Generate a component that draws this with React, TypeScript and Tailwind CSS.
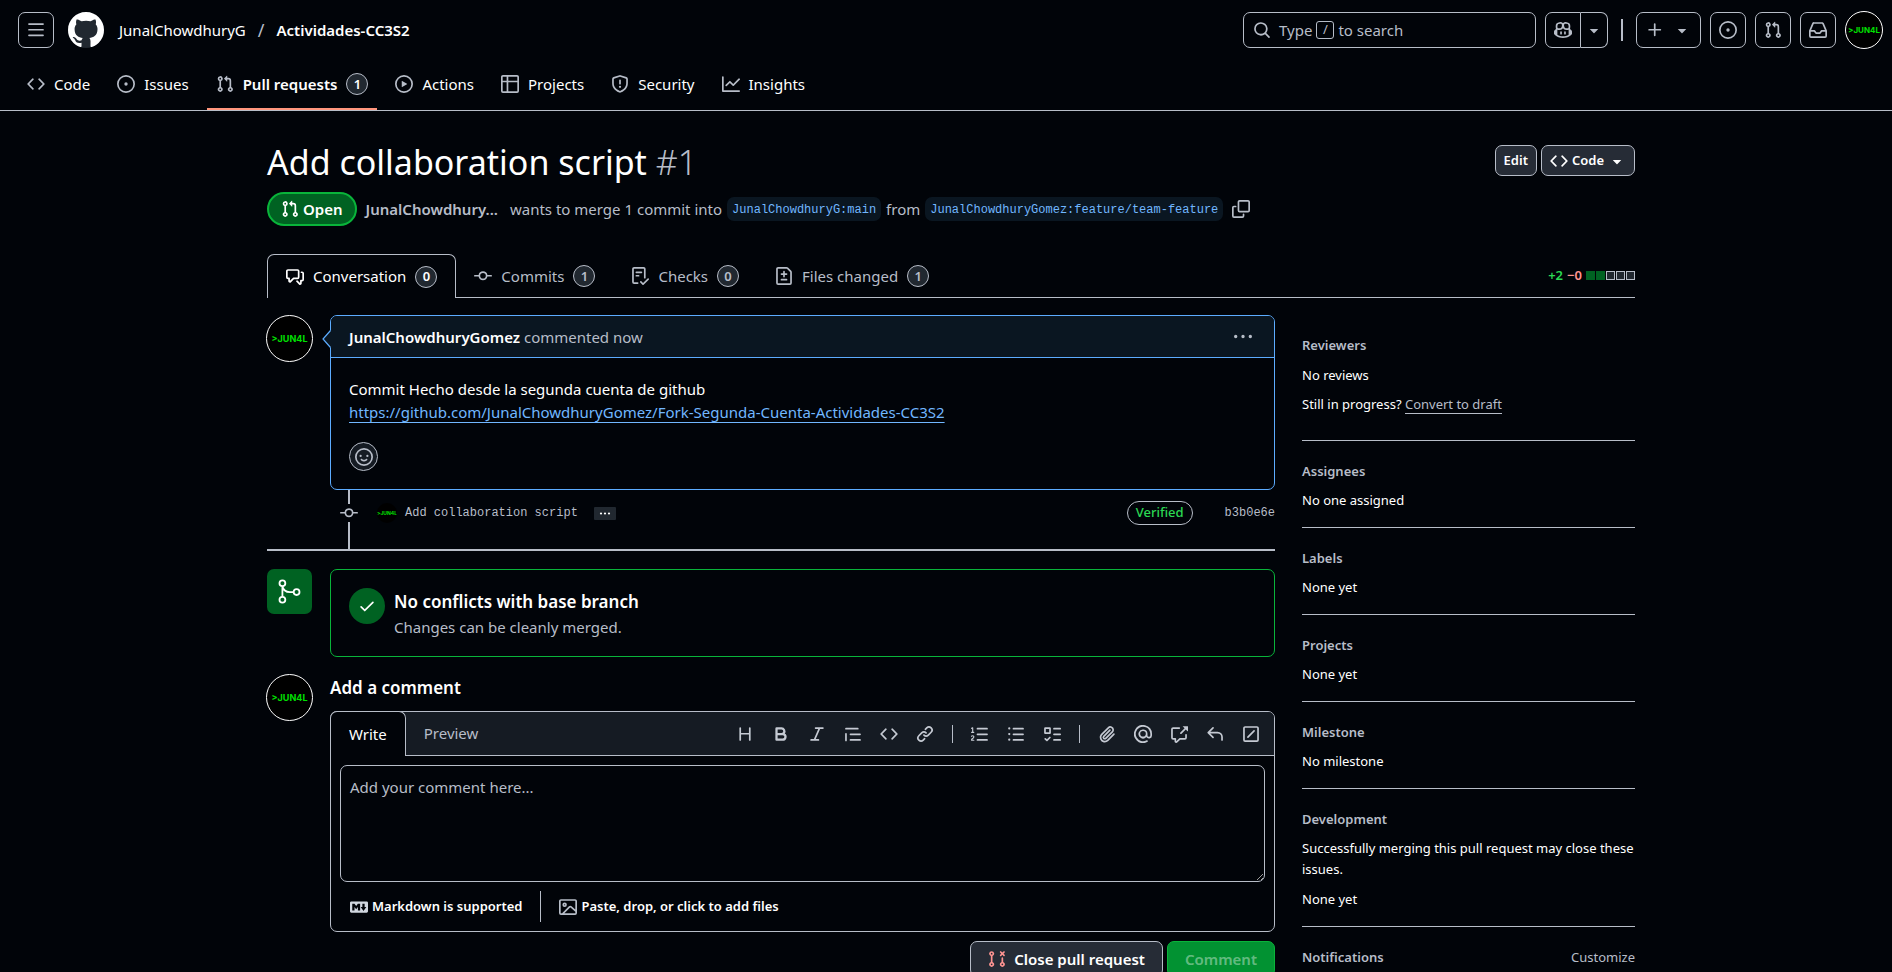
import { useState } from "react";
import type { ReactNode } from "react";

const paths = {
  threeBars:
    "M1 2.75A.75.75 0 0 1 1.75 2h12.5a.75.75 0 0 1 0 1.5H1.75A.75.75 0 0 1 1 2.75Zm0 5A.75.75 0 0 1 1.75 7h12.5a.75.75 0 0 1 0 1.5H1.75A.75.75 0 0 1 1 7.75ZM1.75 12h12.5a.75.75 0 0 1 0 1.5H1.75a.75.75 0 0 1 0-1.5Z",
  github:
    "M8 0c4.42 0 8 3.58 8 8a8.013 8.013 0 0 1-5.45 7.59c-.4.08-.55-.17-.55-.38 0-.27.01-1.13.01-2.2 0-.75-.25-1.23-.54-1.48 1.78-.2 3.65-.88 3.65-3.95 0-.88-.31-1.59-.82-2.15.08-.2.36-1.02-.08-2.12 0 0-.67-.22-2.2.82-.64-.18-1.32-.27-2-.27-.68 0-1.36.09-2 .27-1.53-1.03-2.2-.82-2.2-.82-.44 1.1-.16 1.92-.08 2.12-.51.56-.82 1.28-.82 2.15 0 3.06 1.86 3.75 3.64 3.95-.23.2-.44.55-.51 1.07-.46.21-1.61.55-2.33-.66-.15-.24-.6-.83-1.23-.82-.67.01-.27.38.01.53.34.19.73.9.82 1.13.16.45.68 1.31 2.69.94 0 .67.01 1.3.01 1.49 0 .21-.15.45-.55.38A7.995 7.995 0 0 1 0 8c0-4.42 3.58-8 8-8Z",
  code: "m11.28 3.22 4.25 4.25a.75.75 0 0 1 0 1.06l-4.25 4.25a.749.749 0 0 1-1.275-.326.749.749 0 0 1 .215-.734L13.94 8l-3.72-3.72a.749.749 0 0 1 .326-1.275.749.749 0 0 1 .734.215Zm-6.56 0a.751.751 0 0 1 1.042.018.751.751 0 0 1 .018 1.042L2.06 8l3.72 3.72a.749.749 0 0 1-.326 1.275.749.749 0 0 1-.734-.215L.47 8.53a.75.75 0 0 1 0-1.06Z",
  issue:
    "M8 9.5a1.5 1.5 0 1 0 0-3 1.5 1.5 0 0 0 0 3Z M8 0a8 8 0 1 1 0 16A8 8 0 0 1 8 0ZM1.5 8a6.5 6.5 0 1 0 13 0 6.5 6.5 0 0 0-13 0Z",
  pull: "M1.5 3.25a2.25 2.25 0 1 1 3 2.122v5.256a2.251 2.251 0 1 1-1.5 0V5.372A2.25 2.25 0 0 1 1.5 3.25Zm5.677-.177L9.573.677A.25.25 0 0 1 10 .854V2.5h1A2.5 2.5 0 0 1 13.5 5v5.628a2.251 2.251 0 1 1-1.5 0V5a1 1 0 0 0-1-1h-1v1.646a.25.25 0 0 1-.427.177L7.177 3.427a.25.25 0 0 1 0-.354ZM3.75 2.5a.75.75 0 1 0 0 1.5.75.75 0 0 0 0-1.5Zm0 9.5a.75.75 0 1 0 0 1.5.75.75 0 0 0 0-1.5Zm8.25.75a.75.75 0 1 0 1.5 0 .75.75 0 0 0-1.5 0Z",
  play: "M8 0a8 8 0 1 1 0 16A8 8 0 0 1 8 0ZM1.5 8a6.5 6.5 0 1 0 13 0 6.5 6.5 0 0 0-13 0Zm4.879-2.773 4.264 2.559a.25.25 0 0 1 0 .428l-4.264 2.559A.25.25 0 0 1 6 10.559V5.442a.25.25 0 0 1 .379-.215Z",
  table:
    "M0 1.75C0 .784.784 0 1.75 0h12.5C15.216 0 16 .784 16 1.75v12.5A1.75 1.75 0 0 1 14.25 16H1.75A1.75 1.75 0 0 1 0 14.25ZM6.5 6.5v8h7.75a.25.25 0 0 0 .25-.25V6.5Zm8-1.5V1.75a.25.25 0 0 0-.25-.25H6.5V5Zm-13 1.5v7.75c0 .138.112.25.25.25H5v-8ZM5 5V1.5H1.75a.25.25 0 0 0-.25.25V5Z",
  shield:
    "M7.467.133a1.748 1.748 0 0 1 1.066 0l5.25 1.68A1.75 1.75 0 0 1 15 3.48V7c0 1.566-.32 3.182-1.303 4.682-.983 1.498-2.585 2.813-5.032 3.855a1.697 1.697 0 0 1-1.33 0c-2.447-1.042-4.049-2.357-5.032-3.855C1.32 10.182 1 8.566 1 7V3.48a1.75 1.75 0 0 1 1.217-1.667Zm.61 1.429a.25.25 0 0 0-.153 0l-5.25 1.68a.25.25 0 0 0-.174.238V7c0 1.358.275 2.666 1.057 3.86.784 1.194 2.121 2.34 4.366 3.297a.196.196 0 0 0 .154 0c2.245-.956 3.582-2.104 4.366-3.298C13.225 9.666 13.5 8.36 13.5 7V3.48a.251.251 0 0 0-.174-.237l-5.25-1.68ZM8.75 4.75v3a.75.75 0 0 1-1.5 0v-3a.75.75 0 0 1 1.5 0ZM9 10.5a1 1 0 1 1-2 0 1 1 0 0 1 2 0Z",
  graph:
    "M1.5 1.75V13.5h13.75a.75.75 0 0 1 0 1.5H.75a.75.75 0 0 1-.75-.75V1.75a.75.75 0 0 1 1.5 0Zm14.28 2.53-5.25 5.25a.75.75 0 0 1-1.06 0L7 7.06 4.28 9.78a.751.751 0 0 1-1.042-.018.751.751 0 0 1-.018-1.042l3.25-3.25a.75.75 0 0 1 1.06 0L10 7.94l4.72-4.72a.751.751 0 0 1 1.042.018.751.751 0 0 1 .018 1.042Z",
  search:
    "M10.68 11.74a6 6 0 0 1-7.922-8.982 6 6 0 0 1 8.982 7.922l3.04 3.04a.749.749 0 0 1-.326 1.275.749.749 0 0 1-.734-.215ZM11.5 7a4.499 4.499 0 1 0-8.997 0A4.499 4.499 0 0 0 11.5 7Z",
  copilot:
    "M7.998 15.035c-4.562 0-7.873-2.914-7.998-3.749V9.338c.085-.628.677-1.686 1.588-2.065.013-.07.024-.143.036-.218.029-.183.06-.384.126-.612-.201-.508-.254-1.084-.254-1.656 0-.87.128-1.769.693-2.484.579-.733 1.494-1.124 2.724-1.261 1.206-.134 2.262.034 2.944.765.05.053.096.108.139.165.044-.057.094-.112.143-.165.682-.731 1.738-.899 2.944-.765 1.23.137 2.145.528 2.724 1.261.566.715.693 1.614.693 2.484 0 .572-.053 1.148-.254 1.656.066.228.098.429.126.612.012.076.024.148.037.218.924.385 1.522 1.471 1.591 2.095v1.872c0 .766-3.351 3.795-8.002 3.795Zm0-1.485c2.28 0 4.584-1.11 5.002-1.433V7.862l-.023-.116c-.49.21-1.075.291-1.727.291-1.146 0-2.059-.327-2.71-.991A3.222 3.222 0 0 1 8 6.303a3.24 3.24 0 0 1-.544.743c-.65.664-1.563.991-2.71.991-.652 0-1.236-.081-1.727-.291l-.023.116v4.255c.419.323 2.722 1.433 5.002 1.433ZM6.762 2.83c-.193-.206-.637-.413-1.682-.297-1.019.113-1.479.404-1.713.7-.247.312-.369.789-.369 1.554 0 .793.129 1.171.308 1.371.162.181.519.379 1.442.379.853 0 1.339-.235 1.638-.54.315-.322.527-.827.617-1.553.117-.935-.037-1.395-.241-1.614Zm4.155-.297c-1.044-.116-1.488.091-1.681.297-.204.219-.359.679-.242 1.614.091.726.303 1.231.618 1.553.299.305.784.54 1.638.54.922 0 1.28-.198 1.442-.379.179-.2.308-.578.308-1.371 0-.765-.123-1.242-.37-1.554-.233-.296-.693-.587-1.713-.7Z M6.25 9.037a.75.75 0 0 1 .75.75v1.501a.75.75 0 0 1-1.5 0V9.787a.75.75 0 0 1 .75-.75Zm4.25.75v1.501a.75.75 0 0 1-1.5 0V9.787a.75.75 0 0 1 1.5 0Z",
  triangle:
    "m4.427 7.427 3.396 3.396a.25.25 0 0 0 .354 0l3.396-3.396A.25.25 0 0 0 11.396 7H4.604a.25.25 0 0 0-.177.427Z",
  plus: "M7.75 2a.75.75 0 0 1 .75.75V7h4.25a.75.75 0 0 1 0 1.5H8.5v4.25a.75.75 0 0 1-1.5 0V8.5H2.75a.75.75 0 0 1 0-1.5H7V2.75A.75.75 0 0 1 7.75 2Z",
  inbox:
    "M2.8 2.06A1.75 1.75 0 0 1 4.41 1h7.18c.7 0 1.333.417 1.61 1.06l2.74 6.395c.04.093.06.194.06.295v4.5A1.75 1.75 0 0 1 14.25 15H1.75A1.75 1.75 0 0 1 0 13.25v-4.5c0-.101.02-.202.06-.295Zm1.61.44a.25.25 0 0 0-.23.152L1.887 8H4.75a.75.75 0 0 1 .6.3L6.625 10h2.75l1.275-1.7a.75.75 0 0 1 .6-.3h2.863L11.82 2.652a.25.25 0 0 0-.23-.152Zm10.09 7h-2.875l-1.275 1.7a.75.75 0 0 1-.6.3h-3.5a.75.75 0 0 1-.6-.3L4.375 9.5H1.5v3.75c0 .138.112.25.25.25h12.5a.25.25 0 0 0 .25-.25Z",
  discussion:
    "M1.75 1h8.5c.966 0 1.75.784 1.75 1.75v5.5A1.75 1.75 0 0 1 10.25 10H7.061l-2.574 2.573A1.458 1.458 0 0 1 2 11.543V10h-.25A1.75 1.75 0 0 1 0 8.25v-5.5C0 1.784.784 1 1.75 1ZM1.5 2.75v5.5c0 .138.112.25.25.25h1a.75.75 0 0 1 .75.75v2.19l2.72-2.72a.749.749 0 0 1 .53-.22h3.5a.25.25 0 0 0 .25-.25v-5.5a.25.25 0 0 0-.25-.25h-8.5a.25.25 0 0 0-.25.25Zm13 2a.25.25 0 0 0-.25-.25h-.5a.75.75 0 0 1 0-1.5h.5c.966 0 1.75.784 1.75 1.75v5.5A1.75 1.75 0 0 1 14.25 12H14v1.543a1.458 1.458 0 0 1-2.487 1.03L9.22 12.28a.749.749 0 0 1 .326-1.275.749.749 0 0 1 .734.215l2.22 2.22v-2.19a.75.75 0 0 1 .75-.75h1a.25.25 0 0 0 .25-.25Z",
  commit:
    "M11.93 8.5a4.002 4.002 0 0 1-7.86 0H.75a.75.75 0 0 1 0-1.5h3.32a4.002 4.002 0 0 1 7.86 0h3.32a.75.75 0 0 1 0 1.5Zm-1.43-.75a2.5 2.5 0 1 0-5 0 2.5 2.5 0 0 0 5 0Z",
  checklist:
    "M2.5 1.75v11.5c0 .138.112.25.25.25h3.17a.75.75 0 0 1 0 1.5H2.75A1.75 1.75 0 0 1 1 13.25V1.75C1 .784 1.784 0 2.75 0h8.5C12.216 0 13 .784 13 1.75v7.736a.75.75 0 0 1-1.5 0V1.75a.25.25 0 0 0-.25-.25h-8.5a.25.25 0 0 0-.25.25Zm13.274 9.537v-.001l-4.557 4.45a.75.75 0 0 1-1.055-.008l-1.943-1.95a.75.75 0 0 1 1.062-1.058l1.419 1.425 4.026-3.932a.75.75 0 1 1 1.048 1.074ZM4.75 4h4.5a.75.75 0 0 1 0 1.5h-4.5a.75.75 0 0 1 0-1.5ZM4 7.75A.75.75 0 0 1 4.75 7h2a.75.75 0 0 1 0 1.5h-2A.75.75 0 0 1 4 7.75Z",
  fileDiff:
    "M1 1.75C1 .784 1.784 0 2.75 0h7.586c.464 0 .909.184 1.237.513l2.914 2.914c.329.328.513.773.513 1.237v9.586A1.75 1.75 0 0 1 13.25 16H2.75A1.75 1.75 0 0 1 1 14.25Zm1.75-.25a.25.25 0 0 0-.25.25v12.5c0 .138.112.25.25.25h10.5a.25.25 0 0 0 .25-.25V4.664a.25.25 0 0 0-.073-.177l-2.914-2.914a.25.25 0 0 0-.177-.073ZM8 3.25a.75.75 0 0 1 .75.75v1.5h1.5a.75.75 0 0 1 0 1.5h-1.5v1.5a.75.75 0 0 1-1.5 0V7h-1.5a.75.75 0 0 1 0-1.5h1.5V4A.75.75 0 0 1 8 3.25Zm-3 8a.75.75 0 0 1 .75-.75h4.5a.75.75 0 0 1 0 1.5h-4.5a.75.75 0 0 1-.75-.75Z",
  copy: "M0 6.75C0 5.784.784 5 1.75 5h1.5a.75.75 0 0 1 0 1.5h-1.5a.25.25 0 0 0-.25.25v7.5c0 .138.112.25.25.25h7.5a.25.25 0 0 0 .25-.25v-1.5a.75.75 0 0 1 1.5 0v1.5A1.75 1.75 0 0 1 9.25 16h-7.5A1.75 1.75 0 0 1 0 14.25Z M5 1.75C5 .784 5.784 0 6.75 0h7.5C15.216 0 16 .784 16 1.75v7.5A1.75 1.75 0 0 1 14.25 11h-7.5A1.75 1.75 0 0 1 5 9.25Zm1.75-.25a.25.25 0 0 0-.25.25v7.5c0 .138.112.25.25.25h7.5a.25.25 0 0 0 .25-.25v-7.5a.25.25 0 0 0-.25-.25Z",
  kebab:
    "M8 9a1.5 1.5 0 1 0 0-3 1.5 1.5 0 0 0 0 3ZM1.5 9a1.5 1.5 0 1 0 0-3 1.5 1.5 0 0 0 0 3Zm13 0a1.5 1.5 0 1 0 0-3 1.5 1.5 0 0 0 0 3Z",
  smiley:
    "M8 0a8 8 0 1 1 0 16A8 8 0 0 1 8 0ZM1.5 8a6.5 6.5 0 1 0 13 0 6.5 6.5 0 0 0-13 0Zm3.82 1.636a.75.75 0 0 1 1.038.175l.007.009c.103.118.22.222.35.31.264.178.683.37 1.285.37.602 0 1.02-.192 1.285-.371.13-.088.247-.192.35-.31l.007-.008a.75.75 0 0 1 1.222.87c-.06.085-.13.165-.206.242-.16.166-.338.316-.53.445-.63.418-1.37.638-2.127.629-.946 0-1.652-.308-2.126-.63a3.331 3.331 0 0 1-.715-.657.75.75 0 0 1 .16-1.076ZM12 7a1 1 0 1 1-2 0 1 1 0 0 1 2 0ZM5 8a1 1 0 1 1 0-2 1 1 0 0 1 0 2Z",
  check:
    "M13.78 4.22a.75.75 0 0 1 0 1.06l-7.25 7.25a.75.75 0 0 1-1.06 0L2.22 9.28a.751.751 0 0 1 .018-1.042.751.751 0 0 1 1.042-.018L6 10.94l6.72-6.72a.75.75 0 0 1 1.06 0Z",
  heading:
    "M3.75 2a.75.75 0 0 1 .75.75V7h7V2.75a.75.75 0 0 1 1.5 0v10.5a.75.75 0 0 1-1.5 0V8.5h-7v4.75a.75.75 0 0 1-1.5 0V2.75A.75.75 0 0 1 3.75 2Z",
  bold: "M4 2h4.5a3.501 3.501 0 0 1 2.852 5.53A3.499 3.499 0 0 1 9.5 14H4a1 1 0 0 1-1-1V3a1 1 0 0 1 1-1Zm1 7v3h4.5a1.5 1.5 0 0 0 0-3Zm3.5-2a1.5 1.5 0 0 0 0-3H5v3Z",
  italic:
    "M6 2.75A.75.75 0 0 1 6.75 2h6.5a.75.75 0 0 1 0 1.5h-2.505l-3.858 9H9.25a.75.75 0 0 1 0 1.5h-6.5a.75.75 0 0 1 0-1.5h2.505l3.858-9H6.75A.75.75 0 0 1 6 2.75Z",
  quote:
    "M1.75 2.5h10.5a.75.75 0 0 1 0 1.5H1.75a.75.75 0 0 1 0-1.5Zm4 5h8.5a.75.75 0 0 1 0 1.5h-8.5a.75.75 0 0 1 0-1.5Zm0 5h8.5a.75.75 0 0 1 0 1.5h-8.5a.75.75 0 0 1 0-1.5ZM2.5 7.75v6a.75.75 0 0 1-1.5 0v-6a.75.75 0 0 1 1.5 0Z",
  link: "m7.775 3.275 1.25-1.25a3.5 3.5 0 1 1 4.95 4.95l-2.5 2.5a3.5 3.5 0 0 1-4.95 0 .751.751 0 0 1 .018-1.042.751.751 0 0 1 1.042-.018 1.998 1.998 0 0 0 2.83 0l2.5-2.5a2.002 2.002 0 0 0-2.83-2.83l-1.25 1.25a.751.751 0 0 1-1.042-.018.751.751 0 0 1-.018-1.042Zm-4.69 9.64a1.998 1.998 0 0 0 2.83 0l1.25-1.25a.751.751 0 0 1 1.042.018.751.751 0 0 1 .018 1.042l-1.25 1.25a3.5 3.5 0 1 1-4.95-4.95l2.5-2.5a3.5 3.5 0 0 1 4.95 0 .751.751 0 0 1-.018 1.042.751.751 0 0 1-1.042.018 1.998 1.998 0 0 0-2.83 0l-2.5 2.5a1.998 1.998 0 0 0 0 2.83Z",
  ordered:
    "M5 3.25a.75.75 0 0 1 .75-.75h8.5a.75.75 0 0 1 0 1.5h-8.5A.75.75 0 0 1 5 3.25Zm0 5a.75.75 0 0 1 .75-.75h8.5a.75.75 0 0 1 0 1.5h-8.5A.75.75 0 0 1 5 8.25Zm0 5a.75.75 0 0 1 .75-.75h8.5a.75.75 0 0 1 0 1.5h-8.5a.75.75 0 0 1-.75-.75ZM.924 10.32a.5.5 0 0 1-.851-.525l.001-.001.001-.002.002-.004.007-.011c.097-.144.215-.273.348-.384.228-.19.588-.392 1.068-.392.468 0 .858.181 1.126.484.259.294.377.673.377 1.038 0 .987-.686 1.495-1.156 1.845l-.047.035c-.303.225-.522.4-.654.597h1.357a.5.5 0 0 1 0 1H.5a.5.5 0 0 1-.5-.5c0-1.005.692-1.52 1.167-1.875l.035-.025c.531-.396.8-.625.8-1.078a.57.57 0 0 0-.128-.376C1.806 10.068 1.695 10 1.5 10a.658.658 0 0 0-.429.163.835.835 0 0 0-.144.153ZM2.003 2.5V6h.503a.5.5 0 0 1 0 1H.5a.5.5 0 0 1 0-1h.503V3.308l-.28.14a.5.5 0 0 1-.446-.895l1.003-.5a.5.5 0 0 1 .723.447Z",
  unordered:
    "M5.75 2.5h8.5a.75.75 0 0 1 0 1.5h-8.5a.75.75 0 0 1 0-1.5Zm0 5h8.5a.75.75 0 0 1 0 1.5h-8.5a.75.75 0 0 1 0-1.5Zm0 5h8.5a.75.75 0 0 1 0 1.5h-8.5a.75.75 0 0 1 0-1.5ZM2 14a1 1 0 1 1 0-2 1 1 0 0 1 0 2Zm1-6a1 1 0 1 1-2 0 1 1 0 0 1 2 0ZM2 4a1 1 0 1 1 0-2 1 1 0 0 1 0 2Z",
  tasklist:
    "M2 2h4a1 1 0 0 1 1 1v4a1 1 0 0 1-1 1H2a1 1 0 0 1-1-1V3a1 1 0 0 1 1-1Zm4.655 8.595a.75.75 0 0 1 0 1.06L4.03 14.28a.75.75 0 0 1-1.06 0l-1.5-1.5a.749.749 0 0 1 .326-1.275.749.749 0 0 1 .734.215l.97.97 2.095-2.095a.75.75 0 0 1 1.06 0ZM9.75 2.5h5.5a.75.75 0 0 1 0 1.5h-5.5a.75.75 0 0 1 0-1.5Zm0 5h5.5a.75.75 0 0 1 0 1.5h-5.5a.75.75 0 0 1 0-1.5Zm0 5h5.5a.75.75 0 0 1 0 1.5h-5.5a.75.75 0 0 1 0-1.5Zm-7.25-9v3h3v-3Z",
  paperclip:
    "M12.212 3.02a1.753 1.753 0 0 0-2.478.003l-5.83 5.83a3.007 3.007 0 0 0-.88 2.127c0 .795.315 1.551.88 2.116.567.567 1.333.89 2.126.89.79 0 1.548-.321 2.116-.89l5.48-5.48a.75.75 0 0 1 1.061 1.06l-5.48 5.48a4.492 4.492 0 0 1-3.177 1.33c-1.2 0-2.345-.487-3.187-1.33a4.483 4.483 0 0 1-1.32-3.177c0-1.195.475-2.341 1.32-3.186l5.83-5.83a3.25 3.25 0 0 1 5.553 2.297c0 .863-.343 1.691-.953 2.301L7.439 12.39c-.375.377-.884.59-1.416.593a1.998 1.998 0 0 1-1.412-.593 1.992 1.992 0 0 1 0-2.828l5.48-5.48a.751.751 0 0 1 1.042.018.751.751 0 0 1 .018 1.042l-5.48 5.48a.492.492 0 0 0 0 .707.499.499 0 0 0 .352.154.51.51 0 0 0 .356-.154l5.833-5.827a1.755 1.755 0 0 0 0-2.481Z",
  mention:
    "M4.75 2.37a6.501 6.501 0 0 0 6.5 11.26.75.75 0 0 1 .75 1.298A7.999 7.999 0 0 1 .989 4.148 8 8 0 0 1 16 7.75v1.5a2.75 2.75 0 0 1-5.072 1.475 3.999 3.999 0 0 1-6.65-4.19A4 4 0 0 1 12 7.75v1.5a1.25 1.25 0 0 0 2.5 0v-1.5a6.5 6.5 0 0 0-9.75-5.38ZM10.5 7.75a2.5 2.5 0 1 0-5 0 2.5 2.5 0 0 0 5 0Z",
  crossRef:
    "M2.75 3.5a.25.25 0 0 0-.25.25v7.5c0 .138.112.25.25.25h2a.75.75 0 0 1 .75.75v2.19l2.72-2.72a.749.749 0 0 1 .53-.22h4.5a.25.25 0 0 0 .25-.25v-2.5a.75.75 0 0 1 1.5 0v2.5A1.75 1.75 0 0 1 13.25 13H9.06l-2.573 2.573A1.458 1.458 0 0 1 4 14.543V13H2.75A1.75 1.75 0 0 1 1 11.25v-7.5C1 2.784 1.784 2 2.75 2h5.5a.75.75 0 0 1 0 1.5ZM16 1.25v4.146a.25.25 0 0 1-.427.177L14.03 4.03l-3.75 3.75a.749.749 0 0 1-1.275-.326.749.749 0 0 1 .215-.734l3.75-3.75-1.543-1.543A.25.25 0 0 1 11.604 1h4.146a.25.25 0 0 1 .25.25Z",
  reply:
    "M6.78 1.97a.75.75 0 0 1 0 1.06L3.81 6h6.44A4.75 4.75 0 0 1 15 10.75v2.5a.75.75 0 0 1-1.5 0v-2.5a3.25 3.25 0 0 0-3.25-3.25H3.81l2.97 2.97a.749.749 0 0 1-.326 1.275.749.749 0 0 1-.734-.215L1.47 7.28a.75.75 0 0 1 0-1.06l4.25-4.25a.75.75 0 0 1 1.06 0Z",
  slash:
    "M13.25 1c.966 0 1.75.784 1.75 1.75v10.5A1.75 1.75 0 0 1 13.25 15H2.75A1.75 1.75 0 0 1 1 13.25V2.75C1 1.784 1.784 1 2.75 1ZM2.75 2.5a.25.25 0 0 0-.25.25v10.5c0 .138.112.25.25.25h10.5a.25.25 0 0 0 .25-.25V2.75a.25.25 0 0 0-.25-.25Zm8.53 3.28-5.5 5.5a.75.75 0 0 1-1.06-1.06l5.5-5.5a.75.75 0 0 1 1.06 1.06Z",
  markdown:
    "M14.85 3c.63 0 1.15.52 1.14 1.15v7.7c0 .63-.51 1.15-1.15 1.15H1.15C.52 13 0 12.48 0 11.84V4.15C0 3.52.52 3 1.15 3ZM9 11V5H7L5.5 7 4 5H2v6h2V8l1.5 1.92L7 8v3Zm2.99.5L14.5 8H13V5h-2v3H9.5Z",
  image:
    "M16 13.25A1.75 1.75 0 0 1 14.25 15H1.75A1.75 1.75 0 0 1 0 13.25V2.75C0 1.784.784 1 1.75 1h12.5c.966 0 1.75.784 1.75 1.75ZM1.75 2.5a.25.25 0 0 0-.25.25v10.5c0 .138.112.25.25.25h.94l.03-.03 6.077-6.078a1.75 1.75 0 0 1 2.412-.06L14.5 10.31V2.75a.25.25 0 0 0-.25-.25Zm12.5 11a.25.25 0 0 0 .25-.25v-.917l-4.298-3.889a.25.25 0 0 0-.344.009L4.81 13.5ZM7 6a2 2 0 1 1-3.999.001A2 2 0 0 1 7 6ZM5.5 6a.5.5 0 1 0-1 0 .5.5 0 0 0 1 0Z",
  pullClosed:
    "M3.25 1A2.25 2.25 0 0 1 4 5.372v5.256a2.251 2.251 0 1 1-1.5 0V5.372A2.251 2.251 0 0 1 3.25 1Zm9.5 5.5a.75.75 0 0 1 .75.75v3.378a2.251 2.251 0 1 1-1.5 0V7.25a.75.75 0 0 1 .75-.75Zm-2.03-5.273a.75.75 0 0 1 1.06 0l.97.97.97-.97a.748.748 0 0 1 1.265.332.75.75 0 0 1-.205.729l-.97.97.97.97a.751.751 0 0 1-.018 1.042.751.751 0 0 1-1.042.018l-.97-.97-.97.97a.749.749 0 0 1-1.275-.326.749.749 0 0 1 .215-.734l.97-.97-.97-.97a.75.75 0 0 1 0-1.06ZM2.5 3.25a.75.75 0 1 0 1.5 0 .75.75 0 0 0-1.5 0ZM3.25 12a.75.75 0 1 0 0 1.5.75.75 0 0 0 0-1.5Zm9.5 0a.75.75 0 1 0 0 1.5.75.75 0 0 0 0-1.5Z",
};

type IconName = keyof typeof paths;

function Icon({ name, className = "size-[18px]" }: { name: IconName; className?: string }) {
  return (
    <svg viewBox="0 0 16 16" fill="currentColor" aria-hidden="true" className={`shrink-0 ${className}`}>
      <path d={paths[name]} />
    </svg>
  );
}

function Avatar({ className }: { className: string }) {
  return (
    <span
      className={`flex shrink-0 items-center justify-center overflow-hidden rounded-full bg-black font-['Inter',sans-serif] leading-none font-bold text-[#00e000] ${className}`}
    >
      &gt;JUN4L
    </span>
  );
}

function Counter({ children }: { children: ReactNode }) {
  return (
    <span className="flex h-[22px] min-w-[22px] items-center justify-center rounded-full border border-[#b7bdc8] bg-[#212830] px-1 text-[13px] leading-none font-semibold">
      {children}
    </span>
  );
}

const headerButton =
  "flex h-9 w-9 items-center justify-center rounded-[7px] border border-[#b7bdc8] text-[#b7bdc8]";

function Header() {
  return (
    <div className="flex h-[60px] items-center justify-between pr-[9px] pl-[18px]">
      <div className="flex items-center">
        <button aria-label="Open menu" className={headerButton}>
          <Icon name="threeBars" />
        </button>
        <a href="#home" aria-label="Homepage" className="ml-3.5 rounded-full bg-[#212830] text-white">
          <Icon name="github" className="size-9" />
        </a>
        <nav aria-label="Breadcrumb" className="ml-[15px] flex items-center text-[15px]">
          <a href="#owner">JunalChowdhuryG</a>
          <span className="mx-3 text-lg text-[#b7bdc8]">/</span>
          <a href="#repository" className="font-semibold">
            Actividades-CC3S2
          </a>
        </nav>
      </div>
      <div className="flex items-center gap-[9px]">
        <button className="flex h-9 w-[293px] items-center rounded-[7px] border border-[#b7bdc8] px-[9px] text-[15px] text-[#b7bdc8]">
          <Icon name="search" />
          <span className="ml-2">Type</span>
          <kbd className="mx-1 flex h-[18px] w-[18px] items-center justify-center rounded-[3px] border border-[#b7bdc8] font-['Noto_Sans',sans-serif] text-[13px]">
            /
          </kbd>
          to search
        </button>
        <div className="flex">
          <button
            aria-label="Chat with Copilot"
            className="flex h-9 w-9 items-center justify-center rounded-l-[7px] border border-[#b7bdc8] text-[#b7bdc8]"
          >
            <Icon name="copilot" />
          </button>
          <button
            aria-label="Open Copilot menu"
            className="flex h-9 w-[27px] items-center justify-center rounded-r-[7px] border border-l-0 border-[#b7bdc8] text-[#b7bdc8]"
          >
            <Icon name="triangle" />
          </button>
        </div>
        <div className="mx-1 h-[22px] w-0.5 bg-[#b7bdc8]" />
        <button
          aria-label="Create new"
          className="flex h-9 w-[65px] items-center justify-center gap-[9px] rounded-[7px] border border-[#b7bdc8] text-[#b7bdc8]"
        >
          <Icon name="plus" />
          <Icon name="triangle" />
        </button>
        <button aria-label="Issues" className={headerButton}>
          <Icon name="issue" />
        </button>
        <button aria-label="Pull requests" className={headerButton}>
          <Icon name="pull" />
        </button>
        <button aria-label="Notifications" className={headerButton}>
          <Icon name="inbox" />
        </button>
        <button aria-label="Open user menu" className="rounded-full">
          <Avatar className="size-[38px] border border-white text-[8px]" />
        </button>
      </div>
    </div>
  );
}

const repoTabs: { label: string; icon: IconName; count?: number }[] = [
  { label: "Code", icon: "code" },
  { label: "Issues", icon: "issue" },
  { label: "Pull requests", icon: "pull", count: 1 },
  { label: "Actions", icon: "play" },
  { label: "Projects", icon: "table" },
  { label: "Security", icon: "shield" },
  { label: "Insights", icon: "graph" },
];

function RepoNav() {
  return (
    <nav aria-label="Repository" className="flex gap-[9px] border-b border-[#b7bdc8] px-[18px] text-[15px]">
      {repoTabs.map((tab) => {
        const current = tab.count !== undefined;
        return (
          <a
            key={tab.label}
            href={`#${tab.label}`}
            className={`flex h-[50px] items-center gap-[9px] border-b-2 px-[9px] ${
              current ? "border-[#ff967d] font-semibold" : "border-transparent"
            }`}
          >
            <span className="text-[#b7bdc8]">
              <Icon name={tab.icon} />
            </span>
            {tab.label}
            {current && <Counter>{tab.count}</Counter>}
          </a>
        );
      })}
    </nav>
  );
}

function Branch({ children }: { children: ReactNode }) {
  return (
    <a
      href="#branch"
      className="flex h-6 items-center rounded-[7px] bg-[#0a1621] px-[5px] pt-0.5 font-['Liberation_Mono',monospace] text-xs text-[#71b7ff]"
    >
      {children}
    </a>
  );
}

const smallButton =
  "flex h-[31px] items-center rounded-[7px] border border-[#b7bdc8] bg-[#262c36] px-2 text-[13px] font-semibold";

function PageHead() {
  return (
    <div>
      <div className="flex items-start justify-between">
        <h1 className="text-[34px] leading-[46px]">
          Add collaboration script <span className="font-light text-[#b7bdc8]">#1</span>
        </h1>
        <div className="mt-1.5 flex gap-1">
          <button className={smallButton}>Edit</button>
          <button className={smallButton}>
            <Icon name="code" />
            <span className="mr-1 ml-1">Code</span>
            <Icon name="triangle" />
          </button>
        </div>
      </div>
      <div className="mt-[7px] flex items-center text-[15px] text-[#b7bdc8]">
        <span className="flex h-[34px] items-center gap-1 rounded-full border-2 border-[#09b43a] bg-[#006222] px-3 font-semibold text-white">
          <Icon name="pull" />
          Open
        </span>
        <a href="#author" className="ml-[9px] font-semibold">
          JunalChowdhury...
        </a>
        <span className="mr-[5px] ml-3">wants to merge 1 commit into</span>
        <Branch>JunalChowdhuryG:main</Branch>
        <span className="mx-[5px]">from</span>
        <Branch>JunalChowdhuryGomez:feature/team-feature</Branch>
        <button aria-label="Copy branch name" className="ml-[9px]">
          <Icon name="copy" />
        </button>
      </div>
    </div>
  );
}

const pullTabs: { label: string; icon: IconName; count: number }[] = [
  { label: "Conversation", icon: "discussion", count: 0 },
  { label: "Commits", icon: "commit", count: 1 },
  { label: "Checks", icon: "checklist", count: 0 },
  { label: "Files changed", icon: "fileDiff", count: 1 },
];

function PullTabs() {
  return (
    <div className="mt-7 flex items-center justify-between border-b border-[#b7bdc8]">
      <nav aria-label="Pull request" className="-mb-px flex text-[15px]">
        {pullTabs.map((tab, index) => (
          <a
            key={tab.label}
            href={`#${tab.label}`}
            className={`flex h-11 items-center gap-[9px] px-[18px] ${
              index === 0
                ? "rounded-t-[7px] border border-b-0 border-[#b7bdc8] bg-[#010409] text-white"
                : "text-[#b7bdc8]"
            }`}
          >
            <Icon name={tab.icon} />
            {tab.label}
            <Counter>{tab.count}</Counter>
          </a>
        ))}
      </nav>
      <div className="flex items-center gap-1 text-[13px] font-semibold">
        <span className="text-[#2bd853]">+2</span>
        <span className="text-[#ff9492]">−0</span>
        <span className="flex gap-px">
          <span className="size-[9px] bg-[#006222]" />
          <span className="size-[9px] bg-[#006222]" />
          <span className="size-[9px] border border-[#b7bdc8] bg-[#212830]" />
          <span className="size-[9px] border border-[#b7bdc8] bg-[#212830]" />
          <span className="size-[9px] border border-[#b7bdc8] bg-[#212830]" />
        </span>
      </div>
    </div>
  );
}

function Comment() {
  return (
    <div className="flex items-start gap-[17px]">
      <Avatar className="-ml-px size-[47px] border border-white text-[9px]" />
      <article className="relative min-w-0 flex-1 rounded-[7px] border border-[#5cacff]">
        <svg viewBox="0 0 9 18" aria-hidden="true" className="absolute top-[14px] -left-[9px] h-[18px] w-[9px]">
          <path d="M9 0 1 9l8 9Z" fill="#0a1621" />
          <path d="M8.500.5 1 9l7.500 8.500" fill="none" stroke="#5cacff" strokeWidth="1.200" />
        </svg>
        <header className="flex h-[42px] items-center justify-between rounded-t-[6px] border-b border-[#5cacff] bg-[#0a1621] px-[18px] text-[15px]">
          <p className="pt-0.5 text-[#b7bdc8]">
            <a href="#author" className="font-semibold text-white">
              JunalChowdhuryGomez
            </a>{" "}
            commented now
          </p>
          <button aria-label="Show options" className="mr-1 text-[#b7bdc8]">
            <Icon name="kebab" />
          </button>
        </header>
        <div className="px-[18px] pt-5 pb-[18px] text-[15px] leading-[23px]">
          <p>
            Commit Hecho desde la segunda cuenta de github
            <br />
            <a
              href="https://github.com/JunalChowdhuryGomez/Fork-Segunda-Cuenta-Actividades-CC3S2"
              className="text-[#71b7ff] underline decoration-1 underline-offset-4"
            >
              https://github.com/JunalChowdhuryGomez/Fork-Segunda-Cuenta-Actividades-CC3S2
            </a>
          </p>
          <button
            aria-label="Add a reaction"
            className="mt-[18px] flex size-[29px] items-center justify-center rounded-full border border-[#b7bdc8] bg-[#151b23] text-[#b7bdc8]"
          >
            <Icon name="smiley" />
          </button>
        </div>
      </article>
    </div>
  );
}

function CommitRow() {
  return (
    <div className="flex h-[61px] border-b-2 border-[#b7bdc8] pl-[73px]">
      <div className="flex w-[18px] flex-col items-center text-[#b7bdc8]">
        <div className="h-3.5 w-0.5 bg-[#b7bdc8]" />
        <Icon name="commit" />
        <div className="w-0.5 flex-1 bg-[#b7bdc8]" />
      </div>
      <div className="flex h-[46px] flex-1 items-center font-['Liberation_Mono',monospace] text-xs text-[#b7bdc8]">
        <Avatar className="ml-[19px] size-5 text-[5px]" />
        <a href="#commit" className="ml-2">
          Add collaboration script
        </a>
        <button
          aria-label="Expand commit message"
          className="ml-4 flex h-[13px] items-center rounded-[1px] bg-[#212830] px-[5px] text-white"
        >
          <svg viewBox="0 0 12 3" className="h-[3px] w-3" fill="currentColor" aria-hidden="true">
            <circle cx="2" cy="1.500" r="1.100" />
            <circle cx="6" cy="1.500" r="1.100" />
            <circle cx="10" cy="1.500" r="1.100" />
          </svg>
        </button>
        <button className="ml-auto flex h-6 items-center rounded-full border border-[#b7bdc8] px-2 font-['Noto_Sans',sans-serif] text-[13px] font-medium text-[#2bd853]">
          Verified
        </button>
        <a href="#commit" className="ml-8">
          b3b0e6e
        </a>
      </div>
    </div>
  );
}

function MergeStatus() {
  return (
    <div className="mt-[18px] flex items-start gap-[18px]">
      <div className="flex size-[45px] items-center justify-center rounded-[7px] bg-[#006222] text-white">
        <svg
          viewBox="0 0 24 24"
          className="size-[27px]"
          fill="none"
          stroke="currentColor"
          strokeWidth="1.600"
          aria-hidden="true"
        >
          <circle cx="5.700" cy="4.700" r="2.600" />
          <circle cx="5.700" cy="19.300" r="2.600" />
          <circle cx="18.300" cy="12.500" r="2.600" />
          <path d="M5.700 7.300v9.400M5.700 7.300c.6 3.200 3.400 5.200 6.700 5.200h3.300" />
        </svg>
      </div>
      <section className="flex flex-1 gap-[9px] rounded-[7px] border border-[#09b43a] px-[18px] py-[18px]">
        <div className="flex size-9 items-center justify-center rounded-full bg-[#006222] text-white">
          <Icon name="check" />
        </div>
        <div>
          <h2 className="text-[17px] leading-7 font-semibold">No conflicts with base branch</h2>
          <p className="text-[15px] leading-[22px] text-[#b7bdc8]">Changes can be cleanly merged.</p>
        </div>
      </section>
    </div>
  );
}

const toolGroups: { icon: IconName; label: string }[][] = [
  [
    { icon: "heading", label: "Heading" },
    { icon: "bold", label: "Bold" },
    { icon: "italic", label: "Italic" },
    { icon: "quote", label: "Quote" },
    { icon: "code", label: "Code" },
    { icon: "link", label: "Link" },
  ],
  [
    { icon: "ordered", label: "Numbered list" },
    { icon: "unordered", label: "Unordered list" },
    { icon: "tasklist", label: "Task list" },
  ],
  [
    { icon: "paperclip", label: "Attach files" },
    { icon: "mention", label: "Mention" },
    { icon: "crossRef", label: "Reference" },
    { icon: "reply", label: "Saved replies" },
    { icon: "slash", label: "Slash commands" },
  ],
];

function CommentForm() {
  const [body, setBody] = useState("");
  return (
    <div className="mt-[17px] flex items-start gap-[17px]">
      <Avatar className="-ml-px size-[47px] border border-white text-[9px]" />
      <div className="min-w-0 flex-1">
        <h2 className="text-[17px] leading-7 font-semibold">
          <label htmlFor="comment">Add a comment</label>
        </h2>
        <div className="mt-[9px] rounded-[7px] border border-[#b7bdc8]">
          <div className="flex h-11 rounded-t-[6px] border-b border-[#b7bdc8] bg-[#151b23] text-[15px]">
            <button className="-mt-px -mb-px -ml-px rounded-t-[7px] border border-b-0 border-[#b7bdc8] bg-[#010409] px-[18px]">
              Write
            </button>
            <button className="px-[18px] text-[#b7bdc8]">Preview</button>
            <div className="ml-auto flex items-center pr-[5px] text-[#c5cad3]">
              {toolGroups.map((group, index) => (
                <div key={index} className="flex items-center">
                  {index > 0 && <div className="mx-[9px] h-[18px] w-px bg-[#b7bdc8]" />}
                  {group.map((tool) => (
                    <button
                      key={tool.label}
                      aria-label={tool.label}
                      className="flex size-9 items-center justify-center"
                    >
                      <Icon name={tool.icon} />
                    </button>
                  ))}
                </div>
              ))}
            </div>
          </div>
          <div className="px-[9px] pt-[9px]">
            <textarea
              id="comment"
              value={body}
              onChange={(event) => setBody(event.target.value)}
              placeholder="Add your comment here..."
              className="block h-[117px] w-full resize-y rounded-[7px] border border-[#b7bdc8] bg-[#010409] px-[9px] py-[9px] text-[15px] leading-6 text-white placeholder:text-[#b7bdc8]"
            />
          </div>
          <div className="flex items-center px-[19px] py-[9px] text-[13px] font-semibold">
            <a href="#markdown" className="flex items-center gap-1">
              <span className="text-[#d1d7e0]">
                <Icon name="markdown" />
              </span>
              Markdown is supported
            </a>
            <div className="mx-[18px] h-[31px] w-px bg-[#b7bdc8]" />
            <button className="flex items-center gap-1">
              <span className="text-[#b7bdc8]">
                <Icon name="image" />
              </span>
              Paste, drop, or click to add files
            </button>
          </div>
        </div>
        <div className="mt-[9px] flex justify-end gap-1 text-[15px] font-semibold">
          <button className="flex h-9 items-center gap-2 rounded-[7px] border border-[#b7bdc8] bg-[#262c36] px-[17px]">
            <span className="text-[#ff9492]">
              <Icon name="pullClosed" />
            </span>
            Close pull request
          </button>
          <button className="flex h-9 items-center rounded-[7px] border border-[#09b43a] bg-[#029232] px-[17px] text-white/40">
            Comment
          </button>
        </div>
      </div>
    </div>
  );
}

function SideSection({ title, action, children }: { title: string; action?: string; children?: ReactNode }) {
  return (
    <section className="border-b border-[#b7bdc8] pt-[18px] pb-4">
      <div className="flex items-center justify-between leading-6 text-[#b7bdc8]">
        <h3 className="font-semibold">{title}</h3>
        {action && <button>{action}</button>}
      </div>
      {children}
    </section>
  );
}

function Sidebar() {
  return (
    <aside className="w-[333px] shrink-0 pt-[17px] text-[13px] leading-[21px]">
      <SideSection title="Reviewers">
        <p className="mt-2">No reviews</p>
        <p className="mt-2 mb-[9px]">
          Still in progress?{" "}
          <a href="#draft" className="border-b border-[#b7bdc8] text-[#b7bdc8]">
            Convert to draft
          </a>
        </p>
      </SideSection>
      <SideSection title="Assignees">
        <p className="mt-[7px]">No one assigned</p>
      </SideSection>
      <SideSection title="Labels">
        <p className="mt-[7px]">None yet</p>
      </SideSection>
      <SideSection title="Projects">
        <p className="mt-[7px]">None yet</p>
      </SideSection>
      <SideSection title="Milestone">
        <p className="mt-[7px]">No milestone</p>
      </SideSection>
      <SideSection title="Development">
        <p className="mt-[7px]">Successfully merging this pull request may close these issues.</p>
        <p className="mt-[9px]">None yet</p>
      </SideSection>
      <SideSection title="Notifications" action="Customize" />
    </aside>
  );
}

export default function App() {
  return (
    <div className="min-h-screen bg-[#010409] font-['Noto_Sans',sans-serif] text-white">
      <header>
        <Header />
        <RepoNav />
      </header>
      <main className="mx-auto max-w-[1440px] pt-7 pr-[31px] pl-[41px]">
        <PageHead />
        <PullTabs />
        <div className="flex items-start gap-[27px]">
          <div className="min-w-0 flex-1 pt-[17px]">
            <Comment />
            <CommitRow />
            <MergeStatus />
            <CommentForm />
          </div>
          <Sidebar />
        </div>
      </main>
    </div>
  );
}
